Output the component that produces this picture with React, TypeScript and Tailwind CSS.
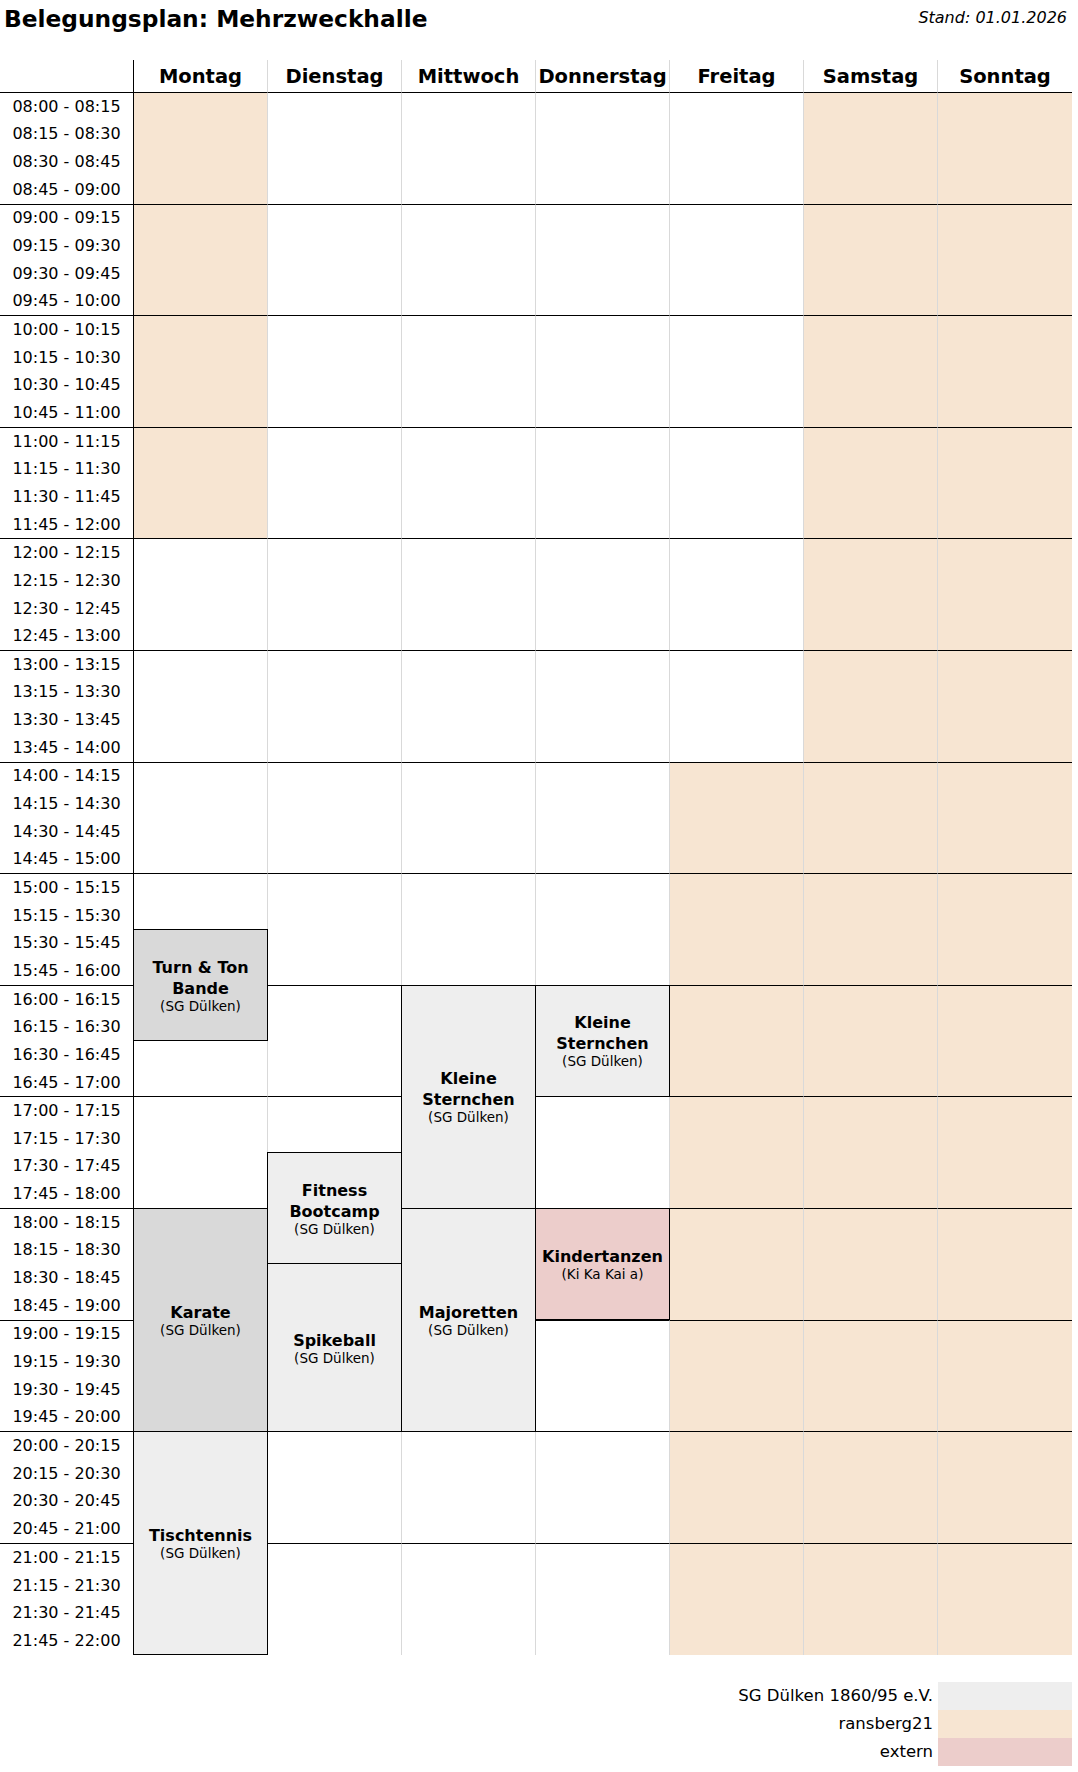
import clsx from "clsx";

const DAYS = ["Montag", "Dienstag", "Mittwoch", "Donnerstag", "Freitag", "Samstag", "Sonntag"];
const HOURS = [8, 9, 10, 11, 12, 13, 14, 15, 16, 17, 18, 19, 20, 21];

// hour index ranges (0 = 08:00) booked by ransberg21
const TINT: Record<string, [number, number]> = {
  Montag: [0, 4],
  Freitag: [6, 14],
  Samstag: [0, 14],
  Sonntag: [0, 14],
};

type Booking = {
  pos: string;
  title: string;
  org: string;
  bg: string;
};

const BOOKINGS: Record<string, Booking[]> = {
  Montag: [
    { pos: "row-[31/span_4]", title: "Turn & Ton Bande", org: "(SG Dülken)", bg: "bg-[#d9d9d9]" },
    { pos: "row-[41/span_8]", title: "Karate", org: "(SG Dülken)", bg: "bg-[#d9d9d9]" },
    { pos: "row-[49/span_8]", title: "Tischtennis", org: "(SG Dülken)", bg: "bg-[#eeeeee]" },
  ],
  Dienstag: [
    { pos: "row-[39/span_4]", title: "Fitness Bootcamp", org: "(SG Dülken)", bg: "bg-[#eeeeee]" },
    { pos: "row-[43/span_6]", title: "Spikeball", org: "(SG Dülken)", bg: "bg-[#eeeeee]" },
  ],
  Mittwoch: [
    { pos: "row-[33/span_8]", title: "Kleine Sternchen", org: "(SG Dülken)", bg: "bg-[#eeeeee]" },
    { pos: "row-[41/span_8]", title: "Majoretten", org: "(SG Dülken)", bg: "bg-[#eeeeee]" },
  ],
  Donnerstag: [
    { pos: "row-[33/span_4]", title: "Kleine Sternchen", org: "(SG Dülken)", bg: "bg-[#eeeeee]" },
    { pos: "row-[41/span_4]", title: "Kindertanzen", org: "(Ki Ka Kai a)", bg: "bg-[#eccdcb]" },
  ],
};

const pad = (n: number) => String(n).padStart(2, "0");

function slotLabels(h: number) {
  return [0, 15, 30, 45].map((m) => {
    const end = m + 15;
    const eh = end === 60 ? h + 1 : h;
    return `${pad(h)}:${pad(m)} - ${pad(eh)}:${pad(end % 60)}`;
  });
}

function TimeColumn() {
  return (
    <div className="flex w-[134px] shrink-0 flex-col">
      <div className="h-[33px] border-r border-b border-black" />
      {HOURS.map((h, i) => (
        <div
          key={h}
          className={clsx(
            "flex h-[111.6px] flex-col border-r border-black",
            i < HOURS.length - 1 && "border-b",
          )}
        >
          {slotLabels(h).map((label) => (
            <div key={label} className="flex flex-1 items-center justify-center text-[16px] text-black">
              {label}
            </div>
          ))}
        </div>
      ))}
    </div>
  );
}

function DayColumn({ day, last }: { day: string; last: boolean }) {
  const tint = TINT[day];
  const bookings = BOOKINGS[day] ?? [];
  return (
    <div className="flex w-[134px] shrink-0 flex-col">
      <div
        className={clsx(
          "flex h-[33px] items-center justify-center border-b border-b-black pt-[1px] text-[19.5px] leading-[31px] font-bold",
          !last && "border-r border-r-[#d9d9d9]",
        )}
      >
        {day}
      </div>
      <div className="grid">
        <div className="col-start-1 row-start-1 flex flex-col">
          {HOURS.map((h, i) => (
            <div
              key={h}
              className={clsx(
                "h-[111.6px]",
                !last && "border-r border-r-[#d9d9d9]",
                i < HOURS.length - 1 && "border-b border-b-black",
                tint && i >= tint[0] && i < tint[1] && "bg-[#f7e5d2]",
              )}
            />
          ))}
        </div>
        <div className="col-start-1 row-start-1 grid grid-rows-[repeat(56,27.9px)]">
          {bookings.map((b) => (
            <div
              key={b.title + b.pos}
              className={clsx(
                b.pos,
                b.bg,
                "col-start-1 -mt-px -ml-px flex flex-col items-center justify-center border border-black text-center",
              )}
            >
              <span className="text-[16px] leading-[21px] font-bold">{b.title}</span>
              <span className="text-[13.5px] leading-[15px]">{b.org}</span>
            </div>
          ))}
        </div>
      </div>
    </div>
  );
}

const LEGEND = [
  { label: "SG Dülken 1860/95 e.V.", bg: "bg-[#eeeeee]" },
  { label: "ransberg21", bg: "bg-[#f7e5d2]" },
  { label: "extern", bg: "bg-[#eccdcb]" },
];

export default function App() {
  return (
    <div className="min-h-[1772px] w-[1078px] bg-white font-['DejaVu_Sans',sans-serif] text-black">
      <div className="flex h-[60px] items-start justify-between">
        <h1 className="pt-[5px] pl-[4px] text-[23.3px] leading-[27px] font-bold">Belegungsplan: Mehrzweckhalle</h1>
        <p className="pt-[8px] pr-[11px] text-[16px] leading-[19px] italic">Stand: 01.01.2026</p>
      </div>
      <div className="flex w-[1072px]">
        <TimeColumn />
        {DAYS.map((d, i) => (
          <DayColumn key={d} day={d} last={i === DAYS.length - 1} />
        ))}
      </div>
      <div className="mt-[27px] flex w-[1072px] flex-col items-end">
        {LEGEND.map((l) => (
          <div key={l.label} className="flex h-[28px] items-center">
            <span className="pr-[5px] text-[16.5px]">{l.label}</span>
            <div className={clsx("h-[28px] w-[134px]", l.bg)} />
          </div>
        ))}
      </div>
    </div>
  );
}
